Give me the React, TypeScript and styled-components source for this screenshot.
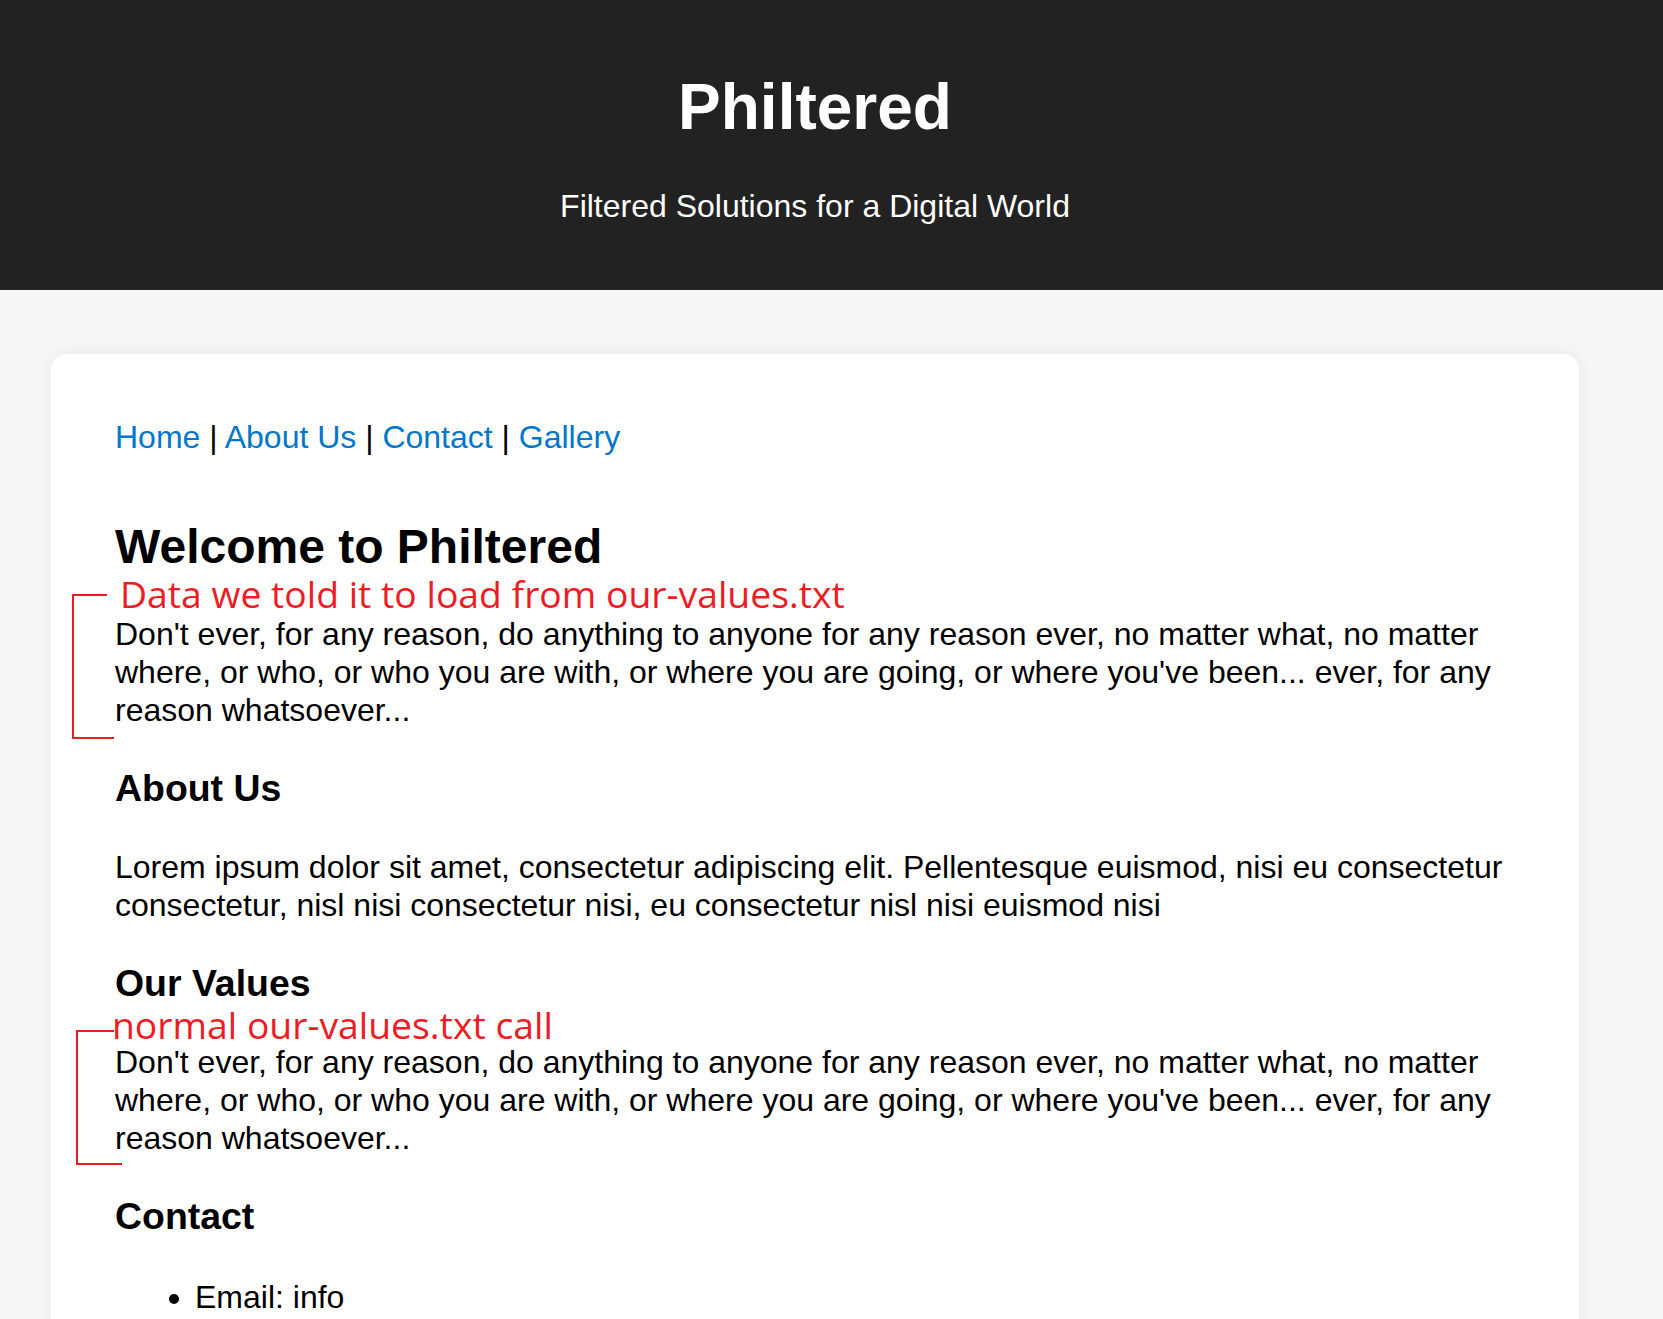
import React from 'react';
import styled, { createGlobalStyle } from 'styled-components';

const GlobalStyle = createGlobalStyle`
  html, body {
    margin: 0;
    padding: 0;
  }
  body {
    background: #f6f6f6;
    color: #000;
    font-family: "Liberation Sans", Arial, sans-serif;
    font-size: 32px;
  }
`;

const SiteHeader = styled.header`
  background: #222222;
  color: #fff;
  text-align: center;
  padding: 70px 33px 65px 0;
`;

const SiteTitle = styled.h1`
  font-size: 64px;
  line-height: 74px;
  font-weight: bold;
  margin: 0 0 43px;
`;

const Tagline = styled.p`
  font-size: 32px;
  line-height: 38px;
  margin: 0;
`;

const Main = styled.main`
  padding: 64px 84px 64px 51px;
`;

const Card = styled.div`
  background: #fff;
  border-radius: 16px;
  box-shadow: 0 0 18px rgba(0, 0, 0, 0.06);
  padding: 64px;
`;

const Nav = styled.nav`
  font-size: 32px;
  line-height: 38px;
  a {
    color: #0077cc;
    text-decoration: none;
  }
`;

const PageTitle = styled.h2`
  font-size: 48px;
  line-height: 55px;
  font-weight: bold;
  margin: 63px 0 41px;
`;

const SectionTitle = styled.h3`
  font-size: 37.44px;
  line-height: 43px;
  font-weight: bold;
  margin: 38px 0;
`;

const Para = styled.p`
  font-size: 32px;
  line-height: 38px;
  margin: 0;
`;

const Annotated = styled.div`
  position: relative;
`;

const Note = styled.span<{ $left: number; $top: number }>`
  position: absolute;
  left: ${(p) => p.$left}px;
  top: ${(p) => p.$top}px;
  font-family: "Open Sans", "Noto Sans", sans-serif;
  font-size: 37.3px;
  line-height: 37px;
  color: #ed1c24;
  white-space: nowrap;
`;

const Bracket = styled.svg<{ $left: number; $top: number }>`
  position: absolute;
  left: ${(p) => p.$left}px;
  top: ${(p) => p.$top}px;
  overflow: visible;
`;

const ContactList = styled.ul`
  margin: 40px 0 0;
  padding-left: 80px;
  li {
    font-size: 32px;
    line-height: 38px;
  }
`;

const values =
  "Don't ever, for any reason, do anything to anyone for any reason ever, no matter what, no matter where, or who, or who you are with, or where you are going, or where you've been... ever, for any reason whatsoever...";

function RedBracket({ left, top, height, topLen, bottomLen }: { left: number; top: number; height: number; topLen: number; bottomLen: number }) {
  return (
    <Bracket $left={left} $top={top} width={bottomLen} height={height}>
      <path
        d={`M ${topLen} 1 H 1 V ${height - 1} H ${bottomLen}`}
        fill="none"
        stroke="#ed1c24"
        strokeWidth="2"
      />
    </Bracket>
  );
}

export default function App() {
  return (
    <>
      <GlobalStyle />
      <SiteHeader>
        <SiteTitle>Philtered</SiteTitle>
        <Tagline>Filtered Solutions for a Digital World</Tagline>
      </SiteHeader>
      <Main>
        <Card>
          <Nav>
            <a href="#home">Home</a> | <a href="#about">About Us</a> | <a href="#contact">Contact</a> | <a href="#gallery">Gallery</a>
          </Nav>

          <PageTitle>Welcome to Philtered</PageTitle>
          <Annotated>
            <Note $left={5} $top={-40}>Data we told it to load from our-values.txt</Note>
            <RedBracket left={-43} top={-21} height={145} topLen={35} bottomLen={42} />
            <Para>{values}</Para>
          </Annotated>

          <SectionTitle>About Us</SectionTitle>
          <Para>
            Lorem ipsum dolor sit amet, consectetur adipiscing elit. Pellentesque euismod, nisi eu consectetur consectetur, nisl nisi consectetur nisi, eu consectetur nisl nisi euismod nisi
          </Para>

          <SectionTitle>Our Values</SectionTitle>
          <Annotated>
            <Note $left={-3} $top={-37}>normal our-values.txt call</Note>
            <RedBracket left={-39} top={-13} height={135} topLen={38} bottomLen={46} />
            <Para>{values}</Para>
          </Annotated>

          <SectionTitle>Contact</SectionTitle>
          <ContactList>
            <li>Email: info</li>
          </ContactList>
        </Card>
      </Main>
    </>
  );
}
